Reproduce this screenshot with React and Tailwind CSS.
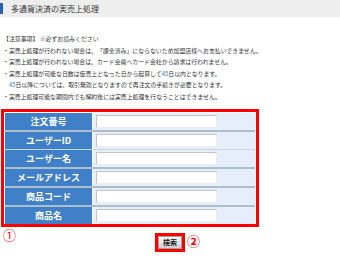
import React from "react";

const rows = ["注文番号", "ユーザーID", "ユーザー名", "メールアドレス", "商品コード", "商品名"];

const notes = [
  "【注意事項】 ※必ずお読みください",
  "・実売上処理が行われない場合は、「課金済み」にならないため加盟店様へお支払いできません。",
  "・実売上処理が行われない場合は、カード会員へカード会社から請求は行われません。",
  "・実売上処理が可能な日数は仮売上となった日から起算して45日以内となります。",
  "\u300045日以降については、取引無効となりますので再注文の手続きが必要となります。",
  "・実売上処理可能な期間内でも解約後には実売上処理を行なうことはできません。",
];

const App = () => {
  return (
    <div
      className="w-[340px] h-[260px] bg-white text-[#333] overflow-hidden"
      style={{ fontFamily: '"Noto Sans CJK JP", "Liberation Sans", sans-serif' }}
    >
      {/* title bar */}
      <div className="h-[17px] bg-[#eeeeee] flex items-center">
        <div className="w-[3px] h-[11px] bg-[#2a5fb4]" />
        <span className="ml-[8px] text-[8px] leading-none text-[#333]">多通貨決済の実売上処理</span>
      </div>

      {/* notes */}
      <div className="mt-[16px] pl-[3px] text-[5.9px] leading-[11.5px] text-[#333] whitespace-nowrap">
        {notes.map((n, i) => (
          <div key={i}>
            {i === 4 ? (
              <>
                {"\u3000"}
                <span className="text-[#3a6fc4]">45</span>
                {n.slice(3)}
              </>
            ) : i === 3 ? (
              <>
                {n.slice(0, 27)}
                <span className="text-[#3a6fc4]">45</span>
                {n.slice(29)}
              </>
            ) : (
              n
            )}
          </div>
        ))}
      </div>

      {/* search form */}
      <div className="mt-[7px] ml-[1px] w-[258px] border-[3px] border-[#ff0000] bg-white px-[1px] pt-[1px]">
        {rows.map((label, i) => (
          <div key={label}>
            {i > 0 && (
              <div className={i === 2 ? "h-[1px] bg-[#c9d6e2]" : "h-[2px] bg-[#aebfcc]"} />
            )}
            <div className="flex h-[17px]">
              <div className="w-[87px] bg-[#3f80c8] flex items-center justify-center text-white font-bold text-[9px] leading-none">
                {label}
              </div>
              <div className="flex-1 ml-[1px] bg-[#e7eefb] flex items-center pl-[3px]">
                <div className="w-[121px] h-[13px] bg-white border-t border-l border-[#c4c4c4] border-r border-b border-r-[#ececec] border-b-[#ececec]" />
              </div>
            </div>
          </div>
        ))}
      </div>

      {/* footer */}
      <div className="flex items-start">
        <span className="ml-[3px] mt-[1px] text-[13px] leading-none text-[#ff0000]">①</span>
        <div className="ml-[139px] mt-[6px] border-[3px] border-[#ff0000] flex">
          <button
            type="button"
            className="w-[24px] h-[13px] bg-gradient-to-b from-[#fafafa] to-[#cfcfcf] border border-[#a0a0a0] text-[7px] font-bold leading-none text-[#222] flex items-center justify-center"
          >
            検索
          </button>
        </div>
        <span className="ml-[2px] mt-[7px] text-[13px] font-bold leading-none text-[#ff0000]">②</span>
      </div>
    </div>
  );
};

export default App;
